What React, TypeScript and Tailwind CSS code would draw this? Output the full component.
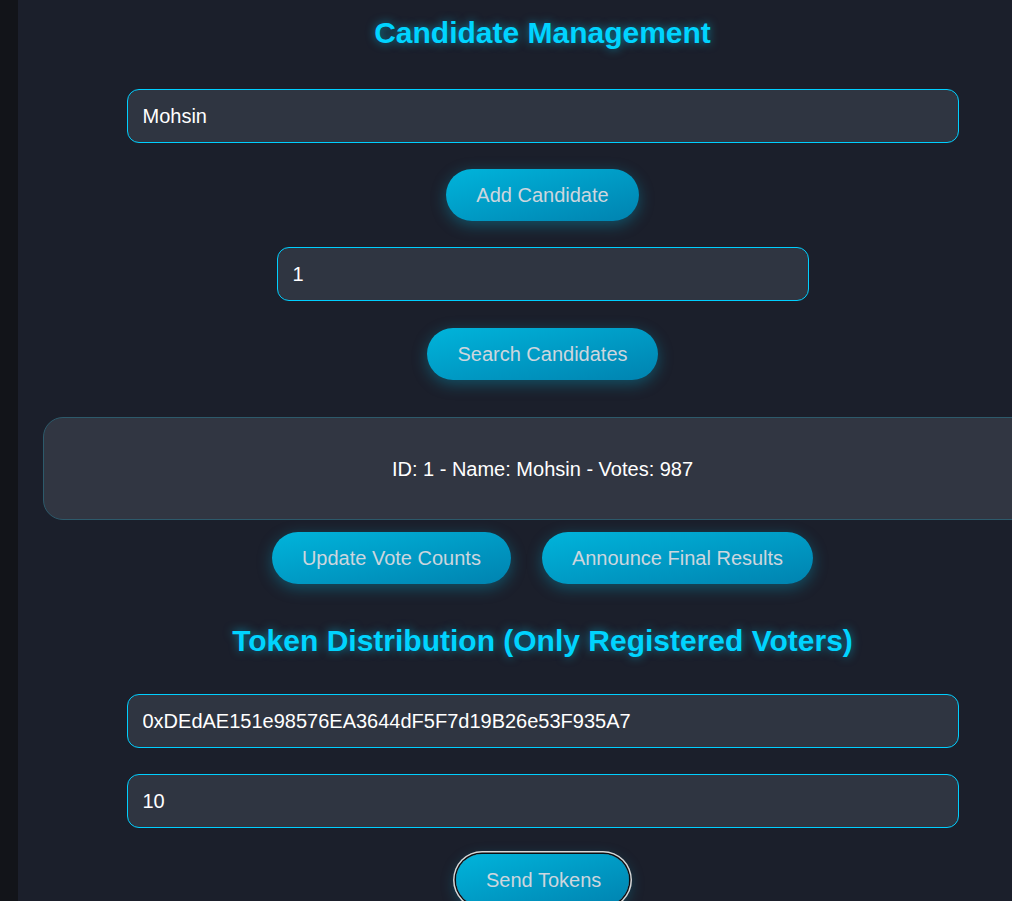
import React from "react";

const font = { fontFamily: '"Liberation Sans", Arial, sans-serif' };

const inputCls =
  "block h-[54px] shrink-0 rounded-[12px] border border-[#00cfff] bg-[#2f3541] px-[15px] text-[20px] text-white outline-none";

const btnCls =
  "h-[52px] shrink-0 whitespace-nowrap rounded-full bg-gradient-to-br from-[#00b4db] to-[#0083b0] px-[30px] text-[20px] text-[#cdd6de] shadow-[0_4px_15px_rgba(0,180,219,0.35)]";

const headCls =
  "shrink-0 text-center text-[30px] font-bold leading-[36px] text-[#00d4ff] [text-shadow:0_0_10px_rgba(0,212,255,0.55)]";

export default function App() {
  return (
    <div className="flex h-[901px] w-[1012px] items-start overflow-hidden bg-[#1b1f2b]" style={font}>
      <div className="h-full w-[18px] shrink-0 bg-[#121419]" />
      <div className="flex w-[1049px] shrink-0 flex-col items-center">
        <h1 className={`${headCls} mt-[15px]`}>Candidate Management</h1>
        <input className={`${inputCls} mt-[38px] w-[832px]`} defaultValue="Mohsin" />
        <button className={`${btnCls} mt-[26px]`}>Add Candidate</button>
        <input className={`${inputCls} mt-[26px] w-[532px]`} defaultValue="1" />
        <button className={`${btnCls} mt-[27px]`}>Search Candidates</button>
        <div className="mt-[37px] flex h-[103px] w-[999px] shrink-0 items-center justify-center rounded-[20px] border border-[#2d5a6b] bg-[#313642] text-[20px] text-white">
          ID: 1 - Name: Mohsin - Votes: 987
        </div>
        <div className="mt-[12px] flex shrink-0 gap-[31px]">
          <button className={btnCls}>Update Vote Counts</button>
          <button className={btnCls}>Announce Final Results</button>
        </div>
        <h2 className={`${headCls} mt-[39px]`}>Token Distribution (Only Registered Voters)</h2>
        <input
          className={`${inputCls} mt-[35px] w-[832px]`}
          defaultValue="0xDEdAE151e98576EA3644dF5F7d19B26e53F935A7"
        />
        <input className={`${inputCls} mt-[26px] w-[832px]`} defaultValue="10" />
        <button
          className={`${btnCls} mt-[26px] w-[173px] px-0 ring-[1.5px] ring-[#d8d8d8] ring-offset-[1.5px] ring-offset-[#0a0c10]`}
        >
          Send Tokens
        </button>
      </div>
    </div>
  );
}
